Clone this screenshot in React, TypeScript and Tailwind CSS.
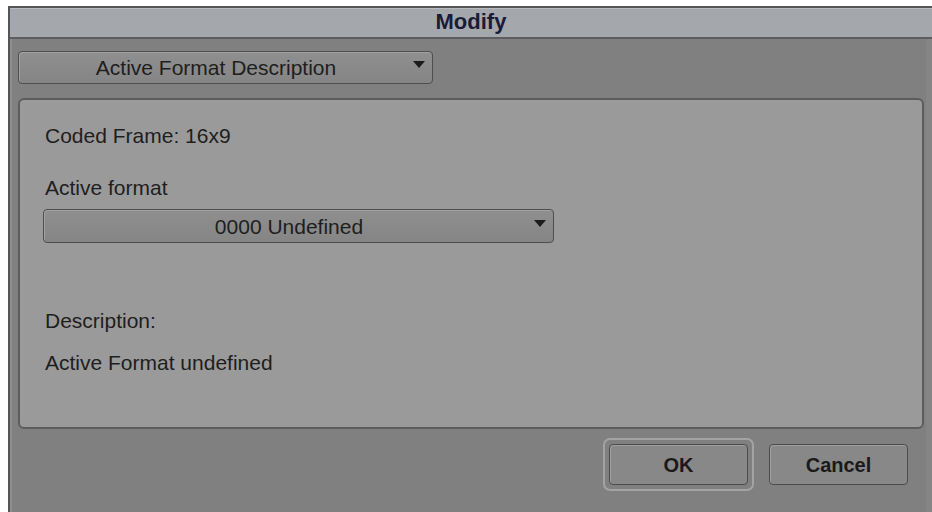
import { ReactNode } from "react";

function Arrow() {
  return (
    <svg width="12" height="8" viewBox="0 0 12 8" className="shrink-0">
      <path d="M0 0 H12 L6 7 Z" fill="#1c1c1c" />
    </svg>
  );
}

interface DropdownProps {
  label: string;
  className?: string;
}

function Dropdown({ label, className }: DropdownProps) {
  return (
    <div
      className={`flex items-center rounded-[4px] border border-[#4e4e4e] bg-gradient-to-b from-[#8f8f8f] to-[#858585] shadow-[inset_1px_1px_0_#a2a2a2] ${className ?? ""}`}
    >
      <span className="flex-1 text-center text-[21px] leading-none text-[#1e1e1e]">{label}</span>
      <div className="pr-[7px] pb-[5px]">
        <Arrow />
      </div>
    </div>
  );
}

function Button({ children, className }: { children: ReactNode; className?: string }) {
  return (
    <div
      className={`flex items-center justify-center rounded-[4px] border border-[#4c4c4c] bg-[#888888] shadow-[inset_1px_1px_0_#a0a0a0] text-[20px] font-bold text-[#1a1a1a] ${className ?? ""}`}
    >
      {children}
    </div>
  );
}

export default function App() {
  return (
    <div
      className="w-[932px] h-[512px] bg-white pt-[6px] pl-[8px] overflow-hidden"
      style={{ fontFamily: '"Liberation Sans", Arial, sans-serif' }}
    >
      <div className="flex flex-col h-full border-t-2 border-l-2 border-[#555555]">
        {/* title bar */}
        <div className="h-[31px] flex items-center justify-center bg-[#a4a8ad] border-t border-[#b8bcc1] border-b-2 border-b-[#5b5d60]">
          <span className="text-[22px] font-bold text-[#1b1b38] leading-none -mt-[2px]">Modify</span>
        </div>

        {/* body */}
        <div className="flex-1 flex flex-col bg-[#808080] border-l-2 border-[#8e8e8e] border-r-[6px] border-r-[#858585] pl-[6px]">
          <Dropdown label="Active Format Description" className="mt-[12px] w-[415px] h-[33px]" />

          <div className="mt-[14px] w-[906px] h-[331px] rounded-[6px] border-2 border-[#5c5c5c] bg-[#9a9a9a] flex flex-col pl-[25px] pt-[24px] text-[21px] leading-[24px] text-[#1e1e1e]">
            <span>Coded Frame: 16x9</span>
            <span className="mt-[28px]">Active format</span>
            <Dropdown label="0000 Undefined" className="mt-[9px] -ml-[2px] w-[511px] h-[34px]" />
            <span className="mt-[66px]">Description:</span>
            <span className="mt-[18px]">Active Format undefined</span>
          </div>

          <div className="flex justify-end items-start mt-[9px] pr-[18px] gap-[15px]">
            <div className="w-[151px] h-[53px] rounded-[7px] border-2 border-[#a3a3a3] p-[4px]">
              <Button className="h-full">OK</Button>
            </div>
            <Button className="mt-[6px] w-[139px] h-[41px]">Cancel</Button>
          </div>
        </div>
      </div>
    </div>
  );
}
